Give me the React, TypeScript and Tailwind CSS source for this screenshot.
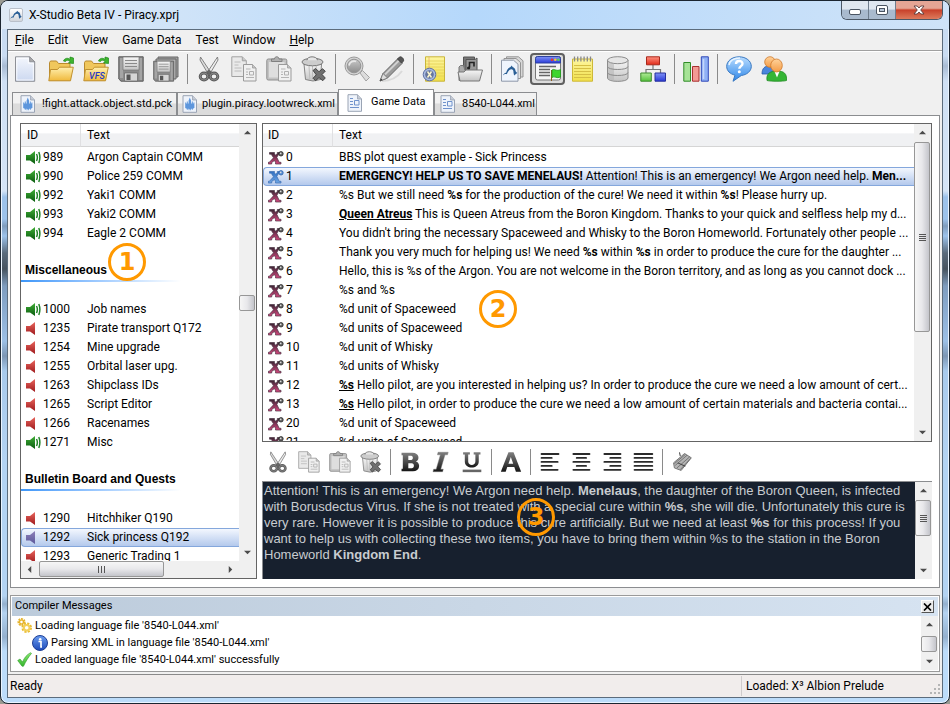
import type { ReactNode } from "react";

/* ---------- shared gradients ---------- */

function Gradients() {
  const stops: [string, string, string][] = [
    ["gPage", "#f4f7fd", "#ccd8f0"],
    ["gFolder", "#fff0b0", "#f0b93c"],
    ["gLight", "#f6f6f6", "#c4c4c4"],
    ["gDark", "#808080", "#151515"],
    ["gSteel", "#c8c8c8", "#8d8d8d"],
    ["gRed", "#ff9080", "#e02a18"],
    ["gGreen", "#b0eb98", "#55c23c"],
    ["gBlue", "#7f92f5", "#2a3ad8"],
    ["gBubble", "#b8dcff", "#2d86e8"],
    ["gNote", "#fdf6a0", "#f1e04a"],
    ["gSkin", "#ffd29a", "#f49b45"],
    ["gInfo", "#6b9df0", "#1c49b8"],
    ["gSpkG", "#3fae36", "#0b5c10"],
    ["gSpkR", "#e8645c", "#a01c1f"],
    ["gSpkB", "#8d7fb8", "#5c5a9c"],
    ["gX", "#3a2433", "#d4487e"],
    ["gXB", "#2f6fc0", "#6ea6e6"],
    ["gCheck", "#8bea72", "#35b52e"],
  ];
  return (
    <svg width="0" height="0" className="absolute" aria-hidden="true">
      <defs>
        {stops.map(([id, a, b]) => (
          <linearGradient key={id} id={id} x1="0" y1="0" x2="0" y2="1">
            <stop offset="0" stopColor={a} />
            <stop offset="1" stopColor={b} />
          </linearGradient>
        ))}
      </defs>
    </svg>
  );
}

function Svg({ size = 26, children }: { size?: number; children: ReactNode }) {
  return (
    <svg width={size} height={size} viewBox="0 0 26 26" fill="none" aria-hidden="true" className="shrink-0">
      {children}
    </svg>
  );
}

/* ---------- toolbar drawings, 26 x 26 ---------- */

const newDoc = (
  <>
    <path d="M2.500 .8h14.200l5 5V25.300H2.500z" fill="url(#gPage)" stroke="#8e9096" />
    <path d="M16.700 .8v5h5z" fill="#aaa" stroke="#8e9096" />
    <path d="M3.800 2.200h11.500v5h5V24H3.800z" stroke="#fff" strokeWidth=".8" />
  </>
);

const folder = (
  <>
    <path d="M1.500 24V6.500l1-1.500h6l2 2.500h11.500V24z" fill="#f0c75c" stroke="#b98a2e" />
    <path d="M.8 24.800l1.700-11.300h7l2-2.300h13.800L22.500 24.800z" fill="url(#gFolder)" stroke="#c0912f" />
    <path d="M15.500 5c1-3 4.500-3.500 6.500-1.500V1l3.500 1v5.500l-5-.5 1.500-1.500C20.500 3.800 18 4 17.500 5.500z" fill="#3fb52f" stroke="#1d8a1a" strokeWidth=".7" />
  </>
);

const vfs = (
  <>
    {folder}
    <text x="6" y="22.500" fontSize="9" fontStyle="italic" fontWeight="500" fill="#2338c8" fontFamily="Roboto, sans-serif">VFS</text>
  </>
);

const floppyShape = (
  <>
    <path d="M.8 .8h24.400v24.400H3L.8 23z" fill="#8b8b8b" stroke="#5b5b5b" />
    <path d="M2 2h3v20H2zM21.500 2H24v22h-2.500z" fill="#a5a5a5" />
    <path d="M5 1h16v13H5z" fill="url(#gLight)" stroke="#777" strokeWidth=".7" />
    <path d="M7 4.500h12M7 7.500h12M7 10.500h12" stroke="#8a8a8a" />
    <path d="M6.500 17h13v8h-13z" fill="#d6d6d6" stroke="#666" strokeWidth=".7" />
    <path d="M8.500 18.500h4V24h-4z" fill="#555" />
  </>
);

const saveAll = (
  <>
    <path d="M5 1h20v20H5z" fill="#a0a0a0" stroke="#666" />
    <path d="M3 3h20v20H3z" fill="#b4b4b4" stroke="#666" />
    <g transform="translate(0 4.500) scale(.82)">{floppyShape}</g>
  </>
);

const cut = (
  <>
    <path d="M4.500 1l10 15-2 2.500L4 4z" fill="#dcdcdc" stroke="#777" strokeWidth=".9" />
    <path d="M21.500 1l-10 15 2 2.500L22 4z" fill="#eee" stroke="#777" strokeWidth=".9" />
    <path d="M10.500 15.500l2.500-2 2.500 2-1 3h-3z" fill="#666" />
    <ellipse cx="8" cy="20.500" rx="3.800" ry="3.500" stroke="#5c5c5c" strokeWidth="3" />
    <ellipse cx="18" cy="20.500" rx="3.800" ry="3.500" stroke="#5c5c5c" strokeWidth="3" />
    <ellipse cx="8" cy="20.500" rx="3.800" ry="3.500" stroke="#8a8a8a" />
    <ellipse cx="18" cy="20.500" rx="3.800" ry="3.500" stroke="#8a8a8a" />
  </>
);

const smallPage = (
  <>
    <path d="M12.500 8.500h9l3.500 3.500v13H12.500z" fill="#f0f0f0" stroke="#9a9a9a" />
    <path d="M21.500 8.500V12H25" fill="#c6c6c6" stroke="#9a9a9a" strokeWidth=".8" />
    <path d="M15 13h4.500M15 21.500h8M15 16h2M15 18.500h2" stroke="#b4b4b4" />
    <path d="M18.500 15.500h4v3.500h-4z" stroke="#b0b0b0" />
  </>
);

const copy = (
  <>
    <path d="M.8 .8h10.500l4 4v15.700H.8z" fill="#e9e9e9" stroke="#a2a2a2" />
    <path d="M11.300 .8v4h4" fill="#c9c9c9" stroke="#a2a2a2" />
    <path d="M3.500 6h6M3.500 9h4M3.500 12h7M3.500 15h7" stroke="#bcbcbc" />
    {smallPage}
  </>
);

const paste = (
  <>
    <rect x=".8" y="3" width="20" height="21" rx="1.500" fill="#c2c2c2" stroke="#8e8e8e" />
    <path d="M3 6h15.500v15.500H3z" fill="#dedede" />
    <path d="M5.500 5.500V3h3c0-3 4.500-3 4.500 0h3v2.500z" fill="#b0b0b0" stroke="#808080" />
    {smallPage}
  </>
);

const trash = (
  <>
    <path d="M3 8h17.500l-1 15.500q-7.500 3-15 0z" fill="url(#gLight)" stroke="#858585" />
    <path d="M8 10l.8 13M11.500 10v13M15.300 10l-.8 13" stroke="#bdbdbd" />
    <ellipse cx="11.500" cy="6" rx="10.500" ry="3.800" fill="#cdcdcd" stroke="#777" />
    <path d="M6 4.200c0-4.500 10-4.500 10.500 0" fill="#e6e6e6" stroke="#777" />
    <path d="M12 14.500l2.500-2 3.500 3.200 3.500-3 2.800 2.500-3.200 3.300 3.200 3.500-2.500 2.700-3.800-3-3.500 3-2.500-2.500 3.300-3.400z" fill="#707070" stroke="#333" strokeWidth=".8" />
  </>
);

const find = (
  <>
    <path d="M16 17l2.500-2.500 7 7-3.500 3.500z" fill="#dcdcdc" stroke="#a2a2a2" />
    <circle cx="10" cy="10" r="9" fill="#d4d4d4" stroke="#9a9a9a" />
    <circle cx="10" cy="10" r="6.800" fill="url(#gSteel)" stroke="#959595" />
    <path d="M5 9.500c.5-3.500 4-5 7-4" stroke="#e8e8e8" strokeWidth="1.800" />
  </>
);

const pencil = (
  <>
    <path d="M3 25c8 0 15-3 20-10" stroke="#dadada" strokeWidth="2" />
    <path d="M1 25l3-7.500L19 2.500l4.500 4.500L8.500 22z" fill="#9b9b9b" stroke="#666" />
    <path d="M6 18.500L20 4.500" stroke="#d0d0d0" strokeWidth="1.800" />
    <path d="M1 25l3-7.500 4.500 4.500z" fill="#dedede" stroke="#777" strokeWidth=".8" />
    <path d="M18.500 3l2-2c2-.8 4.800 2 4 4l-2 2z" fill="#555" stroke="#444" />
    <path d="M1 25l1-2.500 1.500 1.500z" fill="#333" />
  </>
);

const scriptNote = (
  <>
    <path d="M3.500 .8h19v24.400h-19z" fill="url(#gNote)" stroke="#c9b53a" />
    <path d="M4 5h18M4 8h18M4 11h18M4 14h18M4 17h18M4 20h18" stroke="#e5cf56" strokeWidth=".8" />
    <path d="M7 1v24" stroke="#e8a86c" strokeWidth=".7" />
    <circle cx="7.500" cy="18.500" r="6.300" fill="#a9bbe2" stroke="#5f70a0" />
    <circle cx="7.500" cy="18.500" r="4.300" fill="#66759c" />
    <path d="M5.500 15.500l4 6M9.500 15.500l-4 6" stroke="#f6f2cc" strokeWidth="1.500" />
  </>
);

const musicFolder = (
  <>
    <path d="M6.500 1h11v17h-11z" fill="#777" stroke="#555" />
    <path d="M9 3.500h9l2-1.500v16H9z" fill="#9a9a9a" stroke="#555" />
    <path d="M12.500 11.500V6.500h4.500V10.500" stroke="#222" strokeWidth="1.600" />
    <circle cx="11.600" cy="12" r="1.600" fill="#222" />
    <path d="M2 24.500V11l1.500-1.500h3l1.500 5h14v10z" fill="#aaa" stroke="#777" />
    <path d="M3 25l-2-9h6l2-2h16.500L22.500 25z" fill="url(#gLight)" stroke="#777" />
  </>
);

const dolphin = (
  <path d="M4.500 19.500c1-2 2.200-3 4-3.500.8-3.200 2.500-5.500 5-6.500l1.500-2 1 1.800c2.500.6 3.500 3 3.500 5.200l2 2-3.800 3-.7-4c.2-2-.8-3.200-2.300-3.300-2.200 0-3.600 1.600-4.700 4l-.9 1.800c-1.200-.6-2.800-.2-4.600 1.500z" fill="#2a5f96" />
);

const gamePages = (
  <>
    <path d="M6.500 .8h12l4.500 4V21H6.500z" fill="#d8d8d8" stroke="#949494" />
    <path d="M4 2.500h12l4.500 4v16H4z" fill="#e4e4e4" stroke="#949494" />
    <path d="M1.500 4.200h12l4.500 4v17H1.500z" fill="#eef4fd" stroke="#8d97a8" />
    <g transform="translate(-1 3) scale(.85)">{dolphin}</g>
  </>
);

const gameWindow = (
  <>
    <path d="M.5 2.500q0-2 2-2h21q2 0 2 2V22q0 2-2 2h-21q-2 0-2-2z" fill="#f6f6f6" stroke="#777" />
    <path d="M.5 7V2.500q0-2 2-2h21q2 0 2 2V7z" fill="url(#gBlue)" stroke="#2e429f" />
    <circle cx="17" cy="3.800" r="1.300" fill="#e8392b" />
    <circle cx="20.300" cy="3.800" r="1.300" fill="#f5c63a" />
    <circle cx="23.400" cy="3.800" r="1.300" fill="#5fd348" />
    <path d="M4 10.500h17M4 13.500h11M4 16.500h11M4 19.500h11" stroke="#666" strokeWidth="1.300" />
    <path d="M16.500 14v11" stroke="#8a5a20" />
    <path d="M17 14c2.500-2 4.500 2 8.500-.5v7.500c-4 2-6-1.500-8.500.5z" fill="#3fd52e" stroke="#1f9a1c" strokeWidth=".8" />
  </>
);

const notepad = (
  <>
    <path d="M2.500 3h20v22.200h-20z" fill="url(#gNote)" stroke="#cdb838" />
    <path d="M4 9.500h17M4 12.500h17M4 15.500h17M4 18.500h17M4 21.500h17" stroke="#d6bf45" />
    <path d="M4.500 .5v5M7.700 .5v5M10.900 .5v5M14.100 .5v5M17.300 .5v5M20.500 .5v5" stroke="#888" strokeWidth="1.300" />
  </>
);

const database = (
  <>
    <path d="M2.500 4v18c0 4.500 20.500 4.500 20.500 0V4z" fill="url(#gLight)" stroke="#8c8c8c" />
    <path d="M3 5v17.500c1.500 1.500 3.500 2 6 2.300V8z" fill="#b5b5b5" opacity=".6" />
    <path d="M2.500 10.500c0 4 20.500 4 20.500 0M2.500 16.500c0 4 20.500 4 20.500 0" stroke="#8c8c8c" />
    <ellipse cx="12.750" cy="4.200" rx="10.250" ry="3.500" fill="#e6e6e6" stroke="#8c8c8c" />
  </>
);

const tree = (
  <>
    <path d="M13 9v4.500M6 17v-3.500h14.500V17" stroke="#777" strokeWidth="1.200" />
    <path d="M6.500 .8h13v8h-13z" fill="url(#gRed)" stroke="#a8271a" />
    <path d="M.8 17h10.500v8.200H.8z" fill="url(#gGreen)" stroke="#3c8a2c" />
    <path d="M15 17h10.500v8.200H15z" fill="url(#gBlue)" stroke="#27309c" />
  </>
);

const chart = (
  <>
    <path d="M.8 6.500H7.500v18.700H.8z" fill="#a6e396" stroke="#2f8b26" />
    <path d="M9.500 10.500H16v14.700H9.500z" fill="#f29a94" stroke="#a83030" />
    <path d="M18.300 .8h7v24.400h-7z" fill="#8fb0f5" stroke="#3048b8" />
    <path d="M20.500 3v20" stroke="#c4d6fb" strokeWidth="1.600" />
  </>
);

const help = (
  <>
    <path d="M13 .8c7 0 12.300 4.200 12.300 9.500 0 5-4.500 8.500-10 9.200L7 25.300l2-6.200C4 18 .7 14.800 .7 10.300.7 5 6 .8 13 .8z" fill="url(#gBubble)" stroke="#3a78c0" />
    <path d="M3 9c1-5 6-7 11-7" stroke="#e8f4ff" strokeWidth="1.500" />
    <path d="M10 8c0-4 6.500-4 6.500-.3 0 2.300-3.200 2.600-3.200 5" stroke="#fff" strokeWidth="2.400" />
    <circle cx="13.300" cy="15.800" r="1.500" fill="#fff" />
  </>
);

const people = (
  <>
    <path d="M1 18c0-6 3-8 7-8s5 3 5 8z" fill="#4a86dc" stroke="#2a5aa8" strokeWidth=".8" />
    <circle cx="9" cy="6" r="5.300" fill="url(#gSkin)" stroke="#cf7a2c" strokeWidth=".8" />
    <path d="M6 24.500c-1-7 3-9.500 10-9.500s10 2.500 9.500 9.500c-3 1-16 1-19.500 0z" fill="#35b535" stroke="#1f8a22" strokeWidth=".8" />
    <path d="M13.500 15.500l2.500 6 2.500-6z" fill="#fff" />
    <ellipse cx="15.500" cy="9.500" rx="5.800" ry="6.500" fill="url(#gSkin)" stroke="#cf7a2c" strokeWidth=".8" />
  </>
);

/* ---------- format bar drawings ---------- */

const bold = (
  <path fillRule="evenodd" d="M3 2h13c8 0 9 8.500 4 10.300C26 14 25 24 16.500 24H3v-3h1.500v-16H3zM11 5.500v5h3.500c2.500 0 2.500-5 0-5zM11 14.500v6h4c3.500 0 3.500-6 0-6z" fill="url(#gDark)" />
);
const italic = <path d="M9.500 1.500h12l-.8 3h-3l-5 17h3l-.8 3H3.500l.8-3h3l5-17h-3.500z" fill="url(#gDark)" stroke="#777" strokeWidth=".5" />;
const underline = (
  <>
    <path d="M2.500 1.500h8v2.500h-2v8.500c0 5.500 8.500 5.500 8.500 0V4h-2V1.500h8V4h-2v8.500c0 9.500-16.500 9.500-16.500 0V4h-2z" fill="url(#gDark)" />
    <path d="M2 22h22v3H2z" fill="#666" />
  </>
);
const letterA = <path fillRule="evenodd" d="M10 1.500h6l9 23h-6.200l-1.900-5.500H8.600l-1.900 5.500H1zM12.800 7l-2.800 8h5.600z" fill="url(#gDark)" />;

function alignLines(rows: [number, number][]) {
  return (
    <>
      {rows.map(([from, to], i) => (
        <path key={i} d={`M${from} ${3.5 + i * 4.7}H${to}`} stroke="#2b2b2b" strokeWidth="2.200" strokeLinecap="round" />
      ))}
    </>
  );
}
const alignLeft = alignLines([[3, 23], [3, 15], [3, 22], [3, 15], [3, 22]]);
const alignCenter = alignLines([[4, 23], [8, 19], [4, 23], [8, 19], [4, 23]]);
const alignRight = alignLines([[4, 23], [11, 23], [4, 23], [11, 23], [4, 23]]);
const justify = alignLines([[3, 24], [3, 24], [3, 24], [3, 24], [3, 24]]);
const clipIcon = (
  <>
    <path d="M3 14L16 3l8 5-12 15-8-3z" fill="#b4b4b4" stroke="#6a6a6a" />
    <path d="M5 17L19 5M7 20L22 7M4 15L17 4M11 22L23 9" stroke="#6a6a6a" />
    <path d="M11 6L10 1.500M8 14l9 4" stroke="#444" strokeWidth="1.200" />
  </>
);

/* ---------- bars ---------- */

type Tool = { label: string; art: ReactNode; active?: boolean } | "sep";

const mainTools: Tool[] = [
  { label: "New", art: newDoc },
  { label: "Open", art: folder },
  { label: "Open from VFS", art: vfs },
  { label: "Save", art: floppyShape },
  { label: "Save all", art: saveAll },
  "sep",
  { label: "Cut", art: cut },
  { label: "Copy", art: copy },
  { label: "Paste", art: paste },
  { label: "Delete", art: trash },
  "sep",
  { label: "Find", art: find },
  { label: "Edit", art: pencil },
  "sep",
  { label: "Script properties", art: scriptNote },
  { label: "Media", art: musicFolder },
  "sep",
  { label: "Game objects", art: gamePages },
  { label: "Game data", art: gameWindow, active: true },
  { label: "Notes", art: notepad },
  { label: "Database", art: database },
  { label: "Hierarchy", art: tree },
  "sep",
  { label: "Statistics", art: chart },
  "sep",
  { label: "Help", art: help },
  { label: "Community", art: people },
];

const formatTools: Tool[] = [
  { label: "Cut", art: cut },
  { label: "Copy", art: copy },
  { label: "Paste", art: paste },
  { label: "Delete", art: trash },
  "sep",
  { label: "Bold", art: bold },
  { label: "Italic", art: italic },
  { label: "Underline", art: underline },
  "sep",
  { label: "Text colour", art: letterA },
  "sep",
  { label: "Align left", art: alignLeft },
  { label: "Align centre", art: alignCenter },
  { label: "Align right", art: alignRight },
  { label: "Justify", art: justify },
  "sep",
  { label: "Insert button", art: clipIcon },
];

function Separator({ tall }: { tall: boolean }) {
  return (
    <span className="flex w-2 justify-center">
      <span className={tall ? "h-[30px] w-px bg-[#8a8a8a]" : "h-[26px] w-px bg-[#8a8a8a]"} />
    </span>
  );
}

/* ---------- small icons ---------- */

function Speaker({ kind }: { kind: "g" | "r" | "b" }) {
  const fill = kind === "g" ? "url(#gSpkG)" : kind === "r" ? "url(#gSpkR)" : "url(#gSpkB)";
  return (
    <svg width="15" height="14" viewBox="0 0 15 14" fill="none" aria-hidden="true" className="shrink-0">
      <path d="M0 4h4L9 0v13L4 9.500H0z" fill={fill} />
      {kind === "g" && (
        <path d="M10.500 3c1 2 1 5 0 7M12.800 1c1.300 3.300 1.300 7.700 0 11" stroke="#23852a" strokeWidth="1.500" />
      )}
    </svg>
  );
}

function XIcon({ selected }: { selected?: boolean }) {
  return (
    <svg width="16" height="14" viewBox="0 0 16 14" fill="none" aria-hidden="true" className="shrink-0">
      <path
        d="M1.500 1.500h5v1.200l1 1.500 1.800-1.500V1.500H12L8.800 6.300l2.400 5H13v1.700H7.500v-1.500l-1-2-2.800 2V13H.3v-1.700h1l4.200-4.500-2.300-3.600H1.500z"
        fill={selected ? "url(#gXB)" : "url(#gX)"}
        stroke={selected ? "#3d6db0" : "#4a3344"}
        strokeWidth=".7"
      />
      <circle cx="13" cy="2.800" r="2.200" fill={selected ? "#5b93d8" : "#666"} stroke={selected ? "#2c62ac" : "#222"} strokeWidth=".8" />
      <circle cx="12.700" cy="2.400" r=".8" fill="#ddd" />
    </svg>
  );
}

function TabIcon({ kind }: { kind: "script" | "xml" }) {
  return (
    <svg width="16" height="18" viewBox="0 0 16 18" fill="none" aria-hidden="true" className="shrink-0">
      <path d="M1 .7h9.500L14.500 5v12.300H1z" fill="#eef3fb" stroke="#9aa4b4" />
      <path d="M10.500 .7V5h4" fill="#c5cad4" stroke="#9aa4b4" strokeWidth=".8" />
      {kind === "script" ? (
        <path d="M7.800 2.500l1.200 3v3h.8V6.500h1v2h.7V7.500h.9v5.500l-1.600.8v1h-1v-1H9v1.400H8.300v-1H7.300v1H6.600v-1.400h-.8v1h-1v-1L3.200 13V7.500h.9v1h.7v-2h1v2h.8v-3z" fill="#5d96dc" />
      ) : (
        <>
          <path d="M3 4.500h3M3 7.500h3M3 10.500h3M3 13.500h9" stroke="#6f92cc" />
          <path d="M7.500 6.500h4.500v4.500H7.500z" stroke="#6f92cc" />
        </>
      )}
    </svg>
  );
}

/* ---------- scroll bars ---------- */

function Arrow({ dir }: { dir: "up" | "down" | "left" | "right" }) {
  const d = {
    up: "M0 6l4-4 4 4z",
    down: "M0 2l4 4 4-4z",
    left: "M6 0L2 4l4 4z",
    right: "M2 0l4 4-4 4z",
  }[dir];
  return (
    <button type="button" aria-label={`Scroll ${dir}`} className="flex h-[17px] w-[17px] shrink-0 items-center justify-center">
      <svg width="7" height="7" viewBox="0 0 8 8" aria-hidden="true">
        <path d={d} fill="#4c4c4c" />
      </svg>
    </button>
  );
}

function VScroll({ thumb, grip }: { thumb: string; grip?: boolean }) {
  return (
    <div className="flex w-[17px] shrink-0 flex-col bg-[#f0f0f0]">
      <Arrow dir="up" />
      <div className="min-h-0 flex-1">
        <div className={`flex w-4 flex-col items-center justify-center gap-px rounded-xs border border-[#979797] bg-linear-to-r from-[#f6f6f6] via-[#e8e8eb] to-[#c4c5cb] ${thumb}`}>
          {grip && [0, 1, 2, 3].map((i) => <span key={i} className="h-px w-[7px] bg-[#555]" />)}
        </div>
      </div>
      <Arrow dir="down" />
    </div>
  );
}

/* ---------- data ---------- */

type LeftRow = { id: string; text: string; kind: "g" | "r" | "b" } | { group: string };

const leftRows: LeftRow[] = [
  { id: "989", text: "Argon Captain COMM", kind: "g" },
  { id: "990", text: "Police 259 COMM", kind: "g" },
  { id: "992", text: "Yaki1 COMM", kind: "g" },
  { id: "993", text: "Yaki2 COMM", kind: "g" },
  { id: "994", text: "Eagle 2 COMM", kind: "g" },
  { group: "Miscellaneous" },
  { id: "1000", text: "Job names", kind: "g" },
  { id: "1235", text: "Pirate transport Q172", kind: "r" },
  { id: "1254", text: "Mine upgrade", kind: "r" },
  { id: "1255", text: "Orbital laser upg.", kind: "r" },
  { id: "1263", text: "Shipclass IDs", kind: "r" },
  { id: "1265", text: "Script Editor", kind: "r" },
  { id: "1266", text: "Racenames", kind: "r" },
  { id: "1271", text: "Misc", kind: "g" },
  { group: "Bulletin Board and Quests" },
  { id: "1290", text: "Hitchhiker Q190", kind: "r" },
  { id: "1292", text: "Sick princess Q192", kind: "b" },
  { id: "1293", text: "Generic Trading 1", kind: "r" },
];

const rightRows: { id: string; text: ReactNode }[] = [
  { id: "0", text: "BBS plot quest example - Sick Princess" },
  { id: "1", text: <><b>EMERGENCY! HELP US TO SAVE MENELAUS!</b> Attention! This is an emergency! We Argon need help. <b>Men...</b></> },
  { id: "2", text: <>%s But we still need <b>%s</b> for the production of the cure! We need it within <b>%s</b>! Please hurry up.</> },
  { id: "3", text: <><b className="underline">Queen Atreus</b> This is Queen Atreus from the Boron Kingdom. Thanks to your quick and selfless help my d...</> },
  { id: "4", text: "You didn't bring the necessary Spaceweed and Whisky to the Boron Homeworld. Fortunately other people ..." },
  { id: "5", text: <>Thank you very much for helping us! We need <b>%s</b> within <b>%s</b> in order to produce the cure for the daughter ...</> },
  { id: "6", text: "Hello, this is %s of the Argon. You are not welcome in the Boron territory, and as long as you cannot dock ..." },
  { id: "7", text: "%s and %s" },
  { id: "8", text: "%d unit of Spaceweed" },
  { id: "9", text: "%d units of Spaceweed" },
  { id: "10", text: "%d unit of Whisky" },
  { id: "11", text: "%d units of Whisky" },
  { id: "12", text: <><b className="underline">%s</b> Hello pilot, are you interested in helping us? In order to produce the cure we need a low amount of cert...</> },
  { id: "13", text: <><b className="underline">%s</b> Hello pilot, in order to produce the cure we need a low amount of certain materials and bacteria contai...</> },
  { id: "20", text: "%d unit of Spaceweed" },
  { id: "21", text: "%d units of Spaceweed" },
];

const headCell = "h-[23px] border-b border-[#d5d5d5] bg-linear-to-b from-white from-40% to-[#f0f1f3] to-45% p-0 text-left font-normal";
const selLeft = "rounded-l-sm border-y border-l border-[#84a7dc] bg-linear-to-b from-[#f3f7fe] to-[#b4c9ec]";
const selRight = "border-y border-[#84a7dc] bg-linear-to-b from-[#f3f7fe] to-[#b4c9ec]";

function Callout({ n, place }: { n: string; place: string }) {
  return (
    <span className={`absolute flex h-[38px] w-[38px] items-center justify-center rounded-full border-3 border-[#ff9900] font-['DejaVu_Sans',sans-serif] text-2xl leading-none font-bold text-[#ff9900] ${place}`}>
      {n}
    </span>
  );
}

const menus = ["File", "Edit", "View", "Game Data", "Test", "Window", "Help"];

const tabs: { label: string; kind: "script" | "xml"; width: string; active?: boolean }[] = [
  { label: "!fight.attack.object.std.pck", kind: "script", width: "w-[165px] gap-1.5 pl-[7px]" },
  { label: "plugin.piracy.lootwreck.xml", kind: "script", width: "w-[161px] gap-1 pl-1" },
  { label: "Game Data", kind: "xml", width: "w-[96px] gap-2 pl-2", active: true },
  { label: "8540-L044.xml", kind: "xml", width: "w-[103px] gap-1.5 pl-[5px]" },
];

export default function App() {
  return (
    <div className="h-screen min-h-[600px] overflow-hidden bg-[#9a9a92] font-['Roboto','Noto_Sans',sans-serif] text-xs text-black">
      <Gradients />
      <div className="flex h-full flex-col overflow-hidden rounded-lg border border-[#1b2530] bg-[linear-gradient(to_bottom,#c9dcf2_0px,#c9dcf2_55px,#a9bcd4_65px,#cfe0f4_80px,#d4e4f6_190px,#9cc2ea_196px,#9cc2ea_218px,#7f9cbc_225px,#9cc2ea_235px,#5a6b7c_252px,#46535f_268px,#7e9cbe_285px,#9cc0e6_340px,#7c96b4_355px,#a8caec_370px,#b4d3f2_460px,#b4d3f2_595px,#94b0ce_603px,#b4d3f2_612px,#94b0ce_636px,#bcdcfa_650px,#bcdcfa_690px)] shadow-[inset_0_0_0_1px_#eaf4ff]">
        {/* title bar */}
        <header className="flex h-7 shrink-0 items-start justify-between bg-linear-to-r from-[#dfeaf6] via-[#b5d8fb] to-[#cfe3f8] pl-2">
          <div className="flex h-7 items-center gap-1.5">
            <span className="rounded-xs border border-[#b9c0ca] bg-linear-to-b from-white to-[#d2d6dc]">
              <svg width="12" height="12" viewBox="4 6 18 16" aria-hidden="true">{dolphin}</svg>
            </span>
            <h1>X-Studio Beta IV - Piracy.xprj</h1>
          </div>
          <div className="mr-1.5 flex h-[19px] overflow-hidden rounded-b-md border border-t-0 border-[#4c5866]">
            <button type="button" aria-label="Minimise" className="flex w-[27px] items-center justify-center border-r border-[#6f7d8d] bg-linear-to-b from-[#dfe7f0] from-45% to-[#a9bace] to-50%">
              <span className="mt-1 h-1.5 w-3 rounded-xs border border-[#4a5462] bg-white" />
            </button>
            <button type="button" aria-label="Maximise" className="flex w-[27px] items-center justify-center border-r border-[#6f7d8d] bg-linear-to-b from-[#dfe7f0] from-45% to-[#a9bace] to-50%">
              <span className="flex h-2.5 w-3 items-center justify-center rounded-xs border border-[#4a5462] bg-white">
                <span className="h-1 w-1.5 border border-[#4a5462] bg-[#b8c6d8]" />
              </span>
            </button>
            <button type="button" aria-label="Close" className="flex w-[46px] items-center justify-center bg-linear-to-b from-[#e5a595] from-40% via-[#c8402a] via-50% to-[#dd7a5c]">
              <svg width="12" height="10" viewBox="0 0 12 10" aria-hidden="true">
                <path d="M1 1h3.200L6 3l1.800-2H11L7.700 5 11 9H7.800L6 7 4.200 9H1l3.300-4z" fill="#fff" stroke="#5a3b3b" strokeWidth=".9" />
              </svg>
            </button>
          </div>
        </header>

        <div className="mx-1.5 mb-[5px] flex min-h-0 flex-1 flex-col border border-[#5c6c7c] bg-[#f0f0f0]">
          {/* menu */}
          <nav className="flex h-[21px] shrink-0 items-center border-b border-[#a0a0a0]">
            {menus.map((m) => (
              <button key={m} type="button" className="px-[7px]">
                {m === "File" || m === "Help" ? (
                  <>
                    <span className="underline">{m[0]}</span>
                    {m.slice(1)}
                  </>
                ) : (
                  m
                )}
              </button>
            ))}
          </nav>

          {/* main toolbar */}
          <div role="toolbar" aria-label="Main" className="flex h-9 shrink-0 items-center border-t border-white pb-px">
            {mainTools.map((t, i) =>
              t === "sep" ? (
                <Separator key={i} tall />
              ) : (
                <button
                  key={i}
                  type="button"
                  aria-label={t.label}
                  className={
                    t.active
                      ? "flex h-8 w-[35px] items-center justify-center rounded-sm border-2 border-[#606060] bg-[#dcdcdc]"
                      : "flex h-8 w-[35px] items-center justify-center"
                  }
                >
                  <Svg>{t.art}</Svg>
                </button>
              ),
            )}
          </div>

          {/* tabs */}
          <div role="tablist" className="flex h-7 shrink-0 items-end pl-1 text-[11px]">
            {tabs.map((t) => (
              <button
                key={t.label}
                type="button"
                role="tab"
                aria-selected={!!t.active}
                className={`flex items-center border border-b-0 border-[#8b8d90] whitespace-nowrap ${t.width} ${
                  t.active ? "h-[26px] bg-white" : "h-[23px] bg-linear-to-b from-[#f2f2f2] from-45% to-[#dcdcdc] to-50%"
                }`}
              >
                <TabIcon kind={t.kind} />
                {t.label}
              </button>
            ))}
          </div>

          {/* document area */}
          <main className="mx-0.5 flex min-h-0 flex-1 gap-[5px] border border-[#8b8d90] bg-white pt-[7px] pr-[7px] pb-2 pl-[9px]">
            <section className="relative flex w-[237px] shrink-0 flex-col border border-[#646464]">
              <div className="flex min-h-0 flex-1">
                <div className="min-w-0 flex-1 overflow-hidden">
                  <table className="w-full table-fixed border-separate border-spacing-0">
                    <thead>
                      <tr>
                        <th className={`${headCell} w-[60px] border-r border-r-[#e0e0e2] pl-1.5`}>ID</th>
                        <th className={`${headCell} pl-1.5`}>Text</th>
                      </tr>
                    </thead>
                    <tbody>
                      <tr className="h-px"><td colSpan={2} className="p-0" /></tr>
                      {leftRows.map((r) =>
                        "group" in r ? (
                          <tr key={r.group} className="h-[57px]">
                            <th colSpan={2} className="p-0 text-left align-middle font-['Liberation_Sans',Arial,sans-serif] font-bold">
                              <div className="pl-1 leading-[16px]">{r.group}</div>
                              <div className="mt-0.5 h-0.5 w-40 bg-linear-to-r from-[#3c96f8] to-white" />
                            </th>
                          </tr>
                        ) : (
                          <tr key={r.id} className="h-[19px] leading-[17px]">
                            <td className={`p-0 ${r.kind === "b" ? `${selLeft} pl-1` : "pl-[5px]"}`}>
                              <div className="flex items-center gap-0.5">
                                <Speaker kind={r.kind} />
                                {r.id}
                              </div>
                            </td>
                            <td className={`p-0 pl-1.5 whitespace-nowrap ${r.kind === "b" ? selRight : ""}`}>{r.text}</td>
                          </tr>
                        ),
                      )}
                    </tbody>
                  </table>
                </div>
                <VScroll thumb="mt-[154px] h-4" />
              </div>
              <div className="flex h-[17px] shrink-0 bg-[#f0f0f0] pr-[17px]">
                <Arrow dir="left" />
                <div className="flex min-w-0 flex-1">
                  <div className="ml-px flex h-4 w-[125px] items-center justify-center gap-0.5 rounded-xs border border-[#979797] bg-linear-to-b from-[#f6f6f6] via-[#e8e8eb] to-[#c4c5cb]">
                    {[0, 1, 2].map((i) => <span key={i} className="h-[7px] w-px bg-[#555]" />)}
                  </div>
                </div>
                <Arrow dir="right" />
              </div>
              <Callout n="1" place="top-[119px] left-[87px]" />
            </section>

            <div className="flex min-w-0 flex-1 flex-col">
              <section className="relative flex min-h-0 flex-1 border border-[#646464]">
                <div className="min-w-0 flex-1 overflow-hidden">
                  <table className="w-full table-fixed border-separate border-spacing-0">
                    <thead>
                      <tr>
                        <th className={`${headCell} w-[70px] border-r border-r-[#e0e0e2] pl-[5px]`}>ID</th>
                        <th className={`${headCell} pl-1.5`}>Text</th>
                      </tr>
                    </thead>
                    <tbody>
                      <tr className="h-px"><td colSpan={2} className="p-0" /></tr>
                      {rightRows.map((r) => {
                        const sel = r.id === "1";
                        return (
                          <tr key={r.id} className="h-[19px] leading-[17px]">
                            <td className={`p-0 ${sel ? `${selLeft} pl-1` : "pl-[5px]"}`}>
                              <div className="flex items-center gap-0.5">
                                <XIcon selected={sel} />
                                {r.id}
                              </div>
                            </td>
                            <td className={`overflow-hidden p-0 pl-1.5 whitespace-nowrap ${sel ? selRight : ""}`}>{r.text}</td>
                          </tr>
                        );
                      })}
                    </tbody>
                  </table>
                </div>
                <VScroll thumb="mt-px h-[190px]" grip />
                <Callout n="2" place="top-[166px] left-[216px]" />
              </section>

              <div role="toolbar" aria-label="Formatting" className="flex h-[39px] shrink-0 items-center">
                {formatTools.map((t, i) =>
                  t === "sep" ? (
                    <Separator key={i} tall={false} />
                  ) : (
                    <button key={i} type="button" aria-label={t.label} className="flex h-7 w-[31px] items-center justify-center">
                      <Svg size={22}>{t.art}</Svg>
                    </button>
                  ),
                )}
              </div>

              <section className="relative flex h-[98px] shrink-0 border-t border-l border-[#8b8d90]">
                <div
                  role="textbox"
                  aria-multiline="true"
                  aria-label="Text"
                  contentEditable
                  suppressContentEditableWarning
                  className="min-w-0 flex-1 overflow-hidden bg-[#17202e] pt-px pl-px font-['Liberation_Sans',Arial,sans-serif] text-[13px] leading-4 text-[#c8ccd0] outline-none"
                >
                  Attention! This is an emergency! We Argon need help. <b>Menelaus</b>, the daughter of the Boron Queen, is infected with Borusdectus Virus. If she is not treated with a special cure within <b>%s</b>, she will die. Unfortunately this cure is very rare. However it is possible to produce this cure artificially. But we need at least <b>%s</b> for this process! If you want to help us with collecting these two items, you have to bring them within %s to the station in the Boron Homeworld <b>Kingdom End</b>.
                </div>
                <VScroll thumb="mt-px h-9" grip />
                <Callout n="3" place="top-[16px] left-[254px]" />
              </section>
            </div>
          </main>

          {/* compiler messages */}
          <section className="mx-0.5 mt-[7px] mb-0.5 flex h-[77px] shrink-0 flex-col border border-[#9a9a9a] bg-white p-px text-[11px]">
            <div className="flex h-[19px] shrink-0 items-center justify-between bg-linear-to-r from-[#bccbdb] to-[#d6e3f1] pr-1 pl-[3px]">
              <h2>Compiler Messages</h2>
              <button type="button" aria-label="Close messages" className="flex h-[13px] w-[13px] items-center justify-center border border-r-[#555] border-b-[#555] border-t-white border-l-white bg-[#ececec]">
                <svg width="9" height="8" viewBox="0 0 9 8" aria-hidden="true">
                  <path d="M1 .5l7 7M8 .5l-7 7" stroke="#000" strokeWidth="1.700" />
                </svg>
              </button>
            </div>
            <div className="flex min-h-0 flex-1">
              <ul className="min-w-0 flex-1 pt-px leading-[17px]">
                <li className="flex items-center gap-[3px] pl-[5px]">
                  <svg width="15" height="15" viewBox="0 0 15 15" aria-hidden="true">
                    <circle cx="4.500" cy="4" r="2.700" fill="none" stroke="#e5b32c" strokeWidth="2.600" strokeDasharray="1.700 .7" />
                    <circle cx="4.500" cy="4" r="2" fill="none" stroke="#e5b32c" strokeWidth="1.200" />
                    <circle cx="9.700" cy="9.700" r="4" fill="none" stroke="#e9bc32" strokeWidth="2.600" strokeDasharray="2 1.140" />
                    <circle cx="9.700" cy="9.700" r="2.800" fill="none" stroke="#f3d05a" strokeWidth="2" />
                  </svg>
                  Loading language file '8540-L044.xml'
                </li>
                <li className="flex items-center gap-[3px] pl-5">
                  <svg width="16" height="16" viewBox="0 0 16 16" aria-hidden="true">
                    <circle cx="8" cy="8" r="7.500" fill="url(#gInfo)" stroke="#1e3f96" />
                    <circle cx="8.200" cy="4.200" r="1.300" fill="#fff" />
                    <path d="M6.500 6.500H9V12h1" stroke="#fff" strokeWidth="1.700" fill="none" />
                  </svg>
                  Parsing XML in language file '8540-L044.xml'
                </li>
                <li className="flex items-center gap-[3px] pl-[5px]">
                  <svg width="15" height="15" viewBox="0 0 15 15" aria-hidden="true">
                    <path d="M.7 8.500L3 7l2.500 3C7 6 10 2.500 13.500 .7l1 .7C11.500 5 9 9 6.500 14.200H5z" fill="url(#gCheck)" stroke="#2f9a2a" strokeWidth=".6" />
                  </svg>
                  Loaded language file '8540-L044.xml' successfully
                </li>
              </ul>
              <VScroll thumb="mt-[3px] h-4" />
            </div>
          </section>

          {/* status bar */}
          <footer className="flex h-[23px] shrink-0 items-center justify-between border-t border-[#8a8a8a] bg-[#f1edec] pl-0.5">
            <span>Ready</span>
            <span className="flex h-5 w-[201px] items-center justify-between border-l border-[#cfcccc] pl-1">
              <span>Loaded: X³ Albion Prelude</span>
              <svg width="12" height="12" viewBox="0 0 12 12" fill="#b5b5b5" aria-hidden="true" className="self-end">
                <path d="M8 0h2v2H8zM4 4h2v2H4zM8 4h2v2H8zM0 8h2v2H0zM4 8h2v2H4zM8 8h2v2H8z" />
              </svg>
            </span>
          </footer>
        </div>
      </div>
    </div>
  );
}
